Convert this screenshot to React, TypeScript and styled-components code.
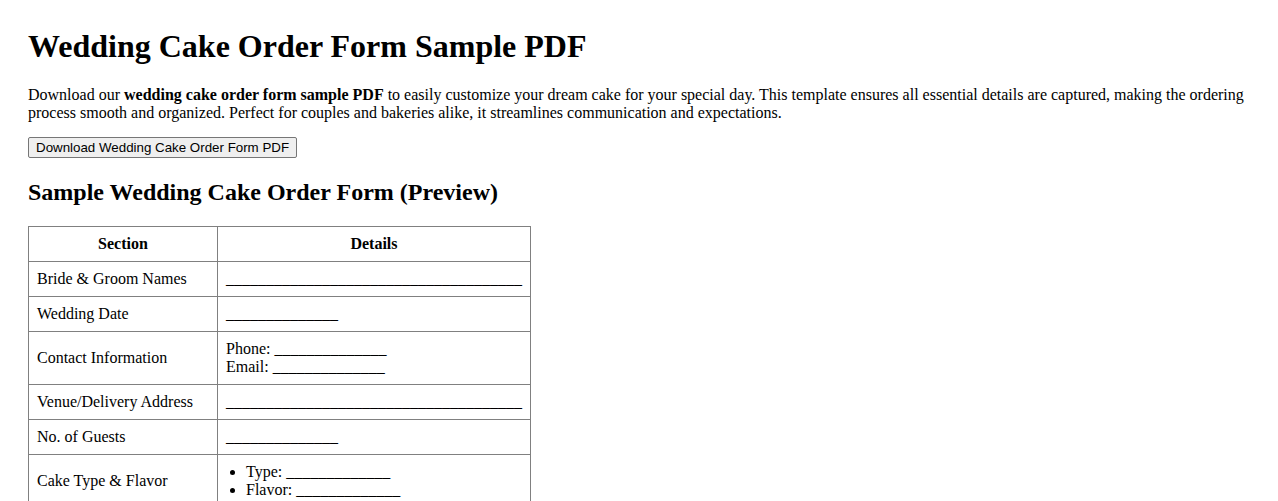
import React from "react";
import styled, { createGlobalStyle } from "styled-components";

const GlobalStyle = createGlobalStyle`
  body {
    margin: 8px;
    font-family: "Liberation Serif", "Times New Roman", serif;
    color: #000;
    background: #fff;
  }
`;

const Page = styled.div`
  padding: 20px;
`;

const Title = styled.h1`
  font-size: 32px;
  font-weight: bold;
  margin: 0 0 21px;
`;

const Intro = styled.p`
  font-size: 16px;
  margin: 0 0 15px;
`;

const ButtonRow = styled.div`
  margin-bottom: 21px;
`;

const DownloadButton = styled.button`
  font-family: "Liberation Sans", Arial, sans-serif;
  font-size: 13.33px;
  padding: 2px 7px;
  border: 1px solid #767676;
  border-radius: 2px;
  background: #efefef;
  color: #000;
`;

const SubTitle = styled.h2`
  font-size: 24px;
  font-weight: bold;
  margin: 0 0 20px;
`;

const FormTable = styled.table`
  border-collapse: collapse;
  font-size: 16px;
`;

const HeadCell = styled.th<{ $width?: number }>`
  border: 1px solid #808080;
  padding: 8px;
  font-weight: bold;
  text-align: center;
  ${({ $width }) => ($width ? `width: ${$width}px;` : "")}
`;

const Cell = styled.td`
  border: 1px solid #808080;
  padding: 8px;
  text-align: left;
  vertical-align: middle;
`;

const FieldList = styled.ul`
  margin: 0;
  padding-left: 20px;
`;

const blank = (n: number) => "_".repeat(n);

interface IRow {
  section: string;
  details: React.ReactNode;
}

const rows: IRow[] = [
  { section: "Bride & Groom Names", details: blank(37) },
  { section: "Wedding Date", details: blank(14) },
  {
    section: "Contact Information",
    details: (
      <>
        Phone: {blank(14)}
        <br />
        Email: {blank(14)}
      </>
    ),
  },
  { section: "Venue/Delivery Address", details: blank(37) },
  { section: "No. of Guests", details: blank(14) },
  {
    section: "Cake Type & Flavor",
    details: (
      <FieldList>
        <li>Type: {blank(13)}</li>
        <li>Flavor: {blank(13)}</li>
      </FieldList>
    ),
  },
];

const App: React.FC = () => (
  <Page>
    <GlobalStyle />
    <Title>Wedding Cake Order Form Sample PDF</Title>
    <Intro>
      Download our <strong>wedding cake order form sample PDF</strong> to easily customize your dream cake
      for your special day. This template ensures all essential details are captured, making the ordering
      process smooth and organized. Perfect for couples and bakeries alike, it streamlines communication and
      expectations.
    </Intro>
    <ButtonRow>
      <DownloadButton type="button">Download Wedding Cake Order Form PDF</DownloadButton>
    </ButtonRow>
    <SubTitle>Sample Wedding Cake Order Form (Preview)</SubTitle>
    <FormTable>
      <thead>
        <tr>
          <HeadCell $width={172}>Section</HeadCell>
          <HeadCell>Details</HeadCell>
        </tr>
      </thead>
      <tbody>
        {rows.map((row) => (
          <tr key={row.section}>
            <Cell>{row.section}</Cell>
            <Cell>{row.details}</Cell>
          </tr>
        ))}
      </tbody>
    </FormTable>
  </Page>
);

export default App;
